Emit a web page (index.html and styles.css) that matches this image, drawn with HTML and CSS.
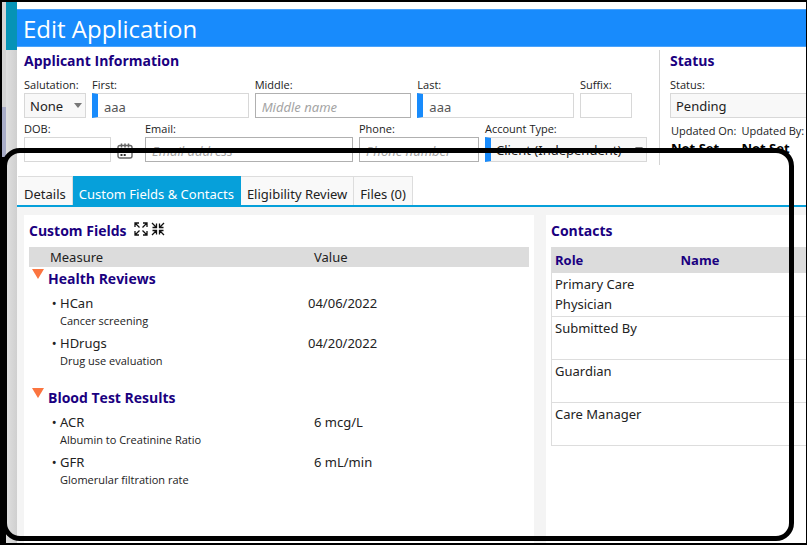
FILE: index.html
```html
<!DOCTYPE html>
<html lang="en">
<head>
    <meta charset="UTF-8">
    <meta name="viewport" content="width=device-width, initial-scale=1.0">
    <title>Edit Application</title>
    <link rel="stylesheet" href="styles.css">
</head>
<body>
    <div class="backdrop">
        <div class="backdrop-edge"></div>
        <div class="backdrop-page"></div>
    </div>

    <main class="dialog">
        <header class="title-bar">
            <h1>Edit Application</h1>
        </header>

        <form class="info">
            <section class="applicant">
                <h2>Applicant Information</h2>
                <div class="row row-name">
                    <div class="field small">
                        <label for="salutation">Salutation:</label>
                        <div class="select"><select id="salutation"><option>None</option></select></div>
                    </div>
                    <div class="field grow">
                        <label for="first">First:</label>
                        <input class="required" id="first" type="text" value="aaa">
                    </div>
                    <div class="field grow">
                        <label for="middle">Middle:</label>
                        <input class="optional" id="middle" type="text" placeholder="Middle name">
                    </div>
                    <div class="field grow">
                        <label for="last">Last:</label>
                        <input class="required" id="last" type="text" value="aaa">
                    </div>
                    <div class="field suffix">
                        <label for="suffix">Suffix:</label>
                        <input id="suffix" type="text">
                    </div>
                </div>
                <div class="row">
                    <div class="field dob">
                        <label for="dob">DOB:</label>
                        <input id="dob" type="text">
                    </div>
                    <button class="calendar" type="button" aria-label="Pick a date">
                        <svg width="16" height="16" viewBox="0 0 16 16" fill="none" stroke="#666">
                            <rect x="1" y="2.5" width="14" height="12.5" rx="2" stroke-width="1.4"/>
                            <path d="M1 6.5h14" stroke-width="1.4"/>
                            <path d="M4.5 .5v4M8 .5v4M11.5 .5v4" stroke-width="1.5"/>
                            <path d="M3.5 12h2M6.700 12h2M10.500 9h2" stroke="#333" stroke-width="2"/>
                        </svg>
                    </button>
                    <div class="field grow">
                        <label for="email">Email:</label>
                        <input class="optional" id="email" type="text" placeholder="Email address">
                    </div>
                    <div class="field phone">
                        <label for="phone">Phone:</label>
                        <input class="optional" id="phone" type="text" placeholder="Phone number">
                    </div>
                    <div class="field account">
                        <label for="account">Account Type:</label>
                        <div class="select"><select class="required" id="account"><option>Client (Independent)</option></select></div>
                    </div>
                </div>
            </section>

            <section class="status">
                <h2>Status</h2>
                <div class="row">
                    <div class="field grow">
                        <label for="status">Status:</label>
                        <select class="open-end" id="status"><option>Pending</option></select>
                    </div>
                </div>
                <dl class="updated">
                    <div><dt>Updated On:</dt><dd>Not Set</dd></div>
                    <div><dt>Updated By:</dt><dd>Not Set</dd></div>
                </dl>
            </section>
        </form>

        <nav class="tabs">
            <button type="button">Details</button>
            <button type="button" class="active">Custom Fields &amp; Contacts</button>
            <button type="button">Eligibility Review</button>
            <button type="button">Files (0)</button>
        </nav>

        <div class="panels">
            <section class="panel custom-fields">
                <div class="panel-title">
                    <h2>Custom Fields</h2>
                    <button class="icon" type="button" aria-label="Expand all">
                        <svg width="14" height="14" viewBox="0 0 14 14" fill="none" stroke="#111" stroke-width="1.3">
                            <path d="M1 5V1h4M1 1l4.500 4.500M9 1h4v4M13 1L8.500 5.500M1 9v4h4M1 13l4.500-4.500M13 9v4H9M13 13L8.500 8.500"/>
                        </svg>
                    </button>
                    <button class="icon" type="button" aria-label="Collapse all">
                        <svg width="14" height="14" viewBox="0 0 14 14" fill="none" stroke="#111" stroke-width="1.3">
                            <path d="M5.500 1.500v4h-4M5.500 5.500L1 1M8.500 1.500v4h4M8.500 5.500L13 1M5.500 12.500v-4h-4M5.500 8.500L1 13M8.500 12.500v-4h4M8.500 8.500L13 13"/>
                        </svg>
                    </button>
                </div>
                <table class="measures">
                    <thead>
                        <tr><th class="measure">Measure</th><th class="value">Value</th></tr>
                    </thead>
                    <tbody>
                        <tr class="group">
                            <th colspan="2"><button type="button" class="toggle" aria-label="Collapse Health Reviews"></button>Health Reviews</th>
                        </tr>
                        <tr><td class="item"><span>HCan</span><small>Cancer screening</small></td><td>04/06/2022</td></tr>
                        <tr><td class="item"><span>HDrugs</span><small>Drug use evaluation</small></td><td>04/20/2022</td></tr>
                    </tbody>
                    <tbody>
                        <tr class="group">
                            <th colspan="2"><button type="button" class="toggle" aria-label="Collapse Blood Test Results"></button>Blood Test Results</th>
                        </tr>
                        <tr><td class="item"><span>ACR</span><small>Albumin to Creatinine Ratio</small></td><td class="number">6 mcg/L</td></tr>
                        <tr><td class="item"><span>GFR</span><small>Glomerular filtration rate</small></td><td class="number">6 mL/min</td></tr>
                    </tbody>
                </table>
            </section>

            <section class="panel contacts">
                <div class="panel-title">
                    <h2>Contacts</h2>
                </div>
                <table class="people">
                    <thead>
                        <tr><th class="role">Role</th><th>Name</th></tr>
                    </thead>
                    <tbody>
                        <tr><td>Primary Care Physician</td><td></td></tr>
                        <tr><td>Submitted By</td><td></td></tr>
                        <tr><td>Guardian</td><td></td></tr>
                        <tr><td>Care Manager</td><td></td></tr>
                    </tbody>
                </table>
            </section>
        </div>
    </main>

    <div class="highlight"></div>
</body>
</html>
```
FILE: styles.css
```css
* {
    box-sizing: border-box;
}

body {
    position: relative;
    display: flex;
    min-height: 100vh;
    margin: 0;
    border: 2px solid #000;
    border-right-width: 1px;
    background: #fff;
    color: #222;
    font: 13px/20px "Noto Sans", "Open Sans", sans-serif;
    overflow: hidden;
}

h1, h2, dl, dd {
    margin: 0;
}

h1, h2, label, dt, dd, small, th {
    font-family: "Open Sans", "Noto Sans", sans-serif;
}

h2 {
    color: #1a0080;
    font-size: 14px;
    line-height: 22px;
}

button, input, select {
    font: inherit;
    color: inherit;
}

button {
    padding: 0;
    border: 0;
    background: none;
}

/* page behind the dialog */
.backdrop {
    display: flex;
    flex: none;
    width: 15px;
}

.backdrop-edge {
    width: 4px;
    background: linear-gradient(#d4d4d4 105px, #a9adc8 105px, #a9adc8 155px, #000 155px);
}

.backdrop-page {
    flex: 1;
    background: linear-gradient(#0693b6 48px, transparent 48px), linear-gradient(to right, #e0e0e0, #cfcfcf);
}

.dialog {
    display: flex;
    flex-direction: column;
    flex: 1;
    min-width: 0;
}

.title-bar {
    margin-top: 7px;
    padding-left: 6px;
    border: 1px solid #4ba3fb;
    border-width: 1px 0;
    background: #188bfc;
    color: #fff;
}

h1 {
    padding-top: 2px;
    font-size: 24px;
    font-weight: 400;
    line-height: 34px;
}

/* applicant form */
.info {
    display: flex;
    padding-top: 3px;
}

.info h2 {
    padding-bottom: 2px;
}

.applicant {
    flex: 1;
    min-width: 0;
    padding: 0 12px 3px 7px;
    border-right: 1px solid #d4d4d4;
}

.row {
    display: flex;
    align-items: flex-end;
    gap: 6px;
    margin-top: 3px;
}

.row-name {
    padding-right: 15px;
}

.field {
    flex: none;
    min-width: 0;
}

.field label, .updated dt {
    display: block;
    font-size: 11px;
    line-height: 16px;
}

.grow {
    flex: 1;
}

.small {
    width: 62px;
}

.suffix {
    width: 52px;
}

.dob {
    width: 87px;
}

.phone {
    width: 120px;
}

.account {
    width: 162px;
}

.field input, .field select {
    display: block;
    width: 100%;
    height: 25px;
    padding: 2px 6px 0;
    border: 1px solid #d8d8d8;
    border-radius: 0;
    background: #fff;
    appearance: none;
}

.field select {
    padding: 0 5px;
    background: #f8f8f8;
}

.field input {
    color: #555;
}

.field .optional {
    border-color: #b0b0b0;
}

.field .required {
    border-left: 6px solid #188bfc;
}

.field .open-end {
    border-right: 0;
}

.field input::placeholder {
    color: #a4a4a4;
    font-style: italic;
}

.select {
    position: relative;
}

.select::after {
    content: "";
    position: absolute;
    top: 10px;
    right: 4px;
    border: 4px solid transparent;
    border-top: 5px solid #777;
    pointer-events: none;
}

.calendar {
    display: flex;
    width: 22px;
    padding-bottom: 3px;
}

.status {
    width: 146px;
    padding-left: 10px;
}

.updated {
    display: flex;
    gap: 5px;
    padding: 5px 0 0 1px;
    white-space: nowrap;
}

.updated dd {
    line-height: 18px;
    font-weight: 700;
    color: #000;
}

/* tabs */
.tabs {
    display: flex;
    margin-top: 11px;
    padding-left: 1px;
    border-bottom: 2px solid #06a0da;
}

.tabs button {
    height: 29px;
    padding: 6px 6px 0;
    border: 1px solid #ddd;
    border-width: 1px 1px 0 0;
    background: #f9f9f9;
}

.tabs .active {
    border-color: #06a0da;
    background: #06a0da;
    color: #fff;
}

/* tab content */
.panels {
    display: flex;
    flex: 1;
    gap: 12px;
    padding: 8px 0 0 7px;
    background: #f4f4f4;
}

.panel {
    padding: 5px 5px 0;
    background: #fff;
}

.custom-fields {
    flex: 1;
}

.contacts {
    width: 260px;
    padding-right: 0;
}

.panel-title {
    display: flex;
    gap: 3px;
    padding-bottom: 5px;
}

.panel-title h2 {
    margin-right: 4px;
}

.icon {
    display: flex;
    padding-top: 2px;
}

table {
    width: 100%;
    border-collapse: collapse;
    table-layout: fixed;
}

th, td {
    padding: 0;
    text-align: left;
    vertical-align: top;
}

.measures thead {
    background: #dcdcdc;
}

.measures thead th {
    font-family: inherit;
    font-weight: 400;
}

.measures .measure {
    width: 279px;
    padding-left: 21px;
}

.measures .value, .measures .number {
    padding-left: 6px;
}

.measures .group th {
    height: 26px;
    padding-top: 1px;
    color: #1a0080;
    font-size: 14px;
    line-height: 22px;
}

.measures tbody + tbody .group th {
    height: 39px;
    padding-top: 14px;
}

.toggle {
    width: 0;
    height: 0;
    margin: 0 4px 0 3px;
    border: 6px solid transparent;
    border-top: 10px solid #fb7540;
    border-bottom: 0;
    vertical-align: 5px;
}

.measures td {
    height: 40px;
}

.item span {
    display: list-item;
    margin-left: 31px;
    list-style: "• ";
}

.item small {
    display: block;
    padding-left: 31px;
    font-size: 11px;
    line-height: 16px;
}

.people {
    border-left: 1px solid #ddd;
}

.people th {
    height: 26px;
    padding: 3px;
    background: #dcdcdc;
    color: #1a0080;
}

.people .role {
    width: 126px;
}

.people td {
    height: 43px;
    padding: 1px 3px 0;
    border-bottom: 1px solid #ddd;
}

/* outline drawn over the tab area */
.highlight {
    position: absolute;
    inset: 146px 12px 2px 0;
    border: 5px solid #000;
    border-radius: 18px;
    pointer-events: none;
}
```
